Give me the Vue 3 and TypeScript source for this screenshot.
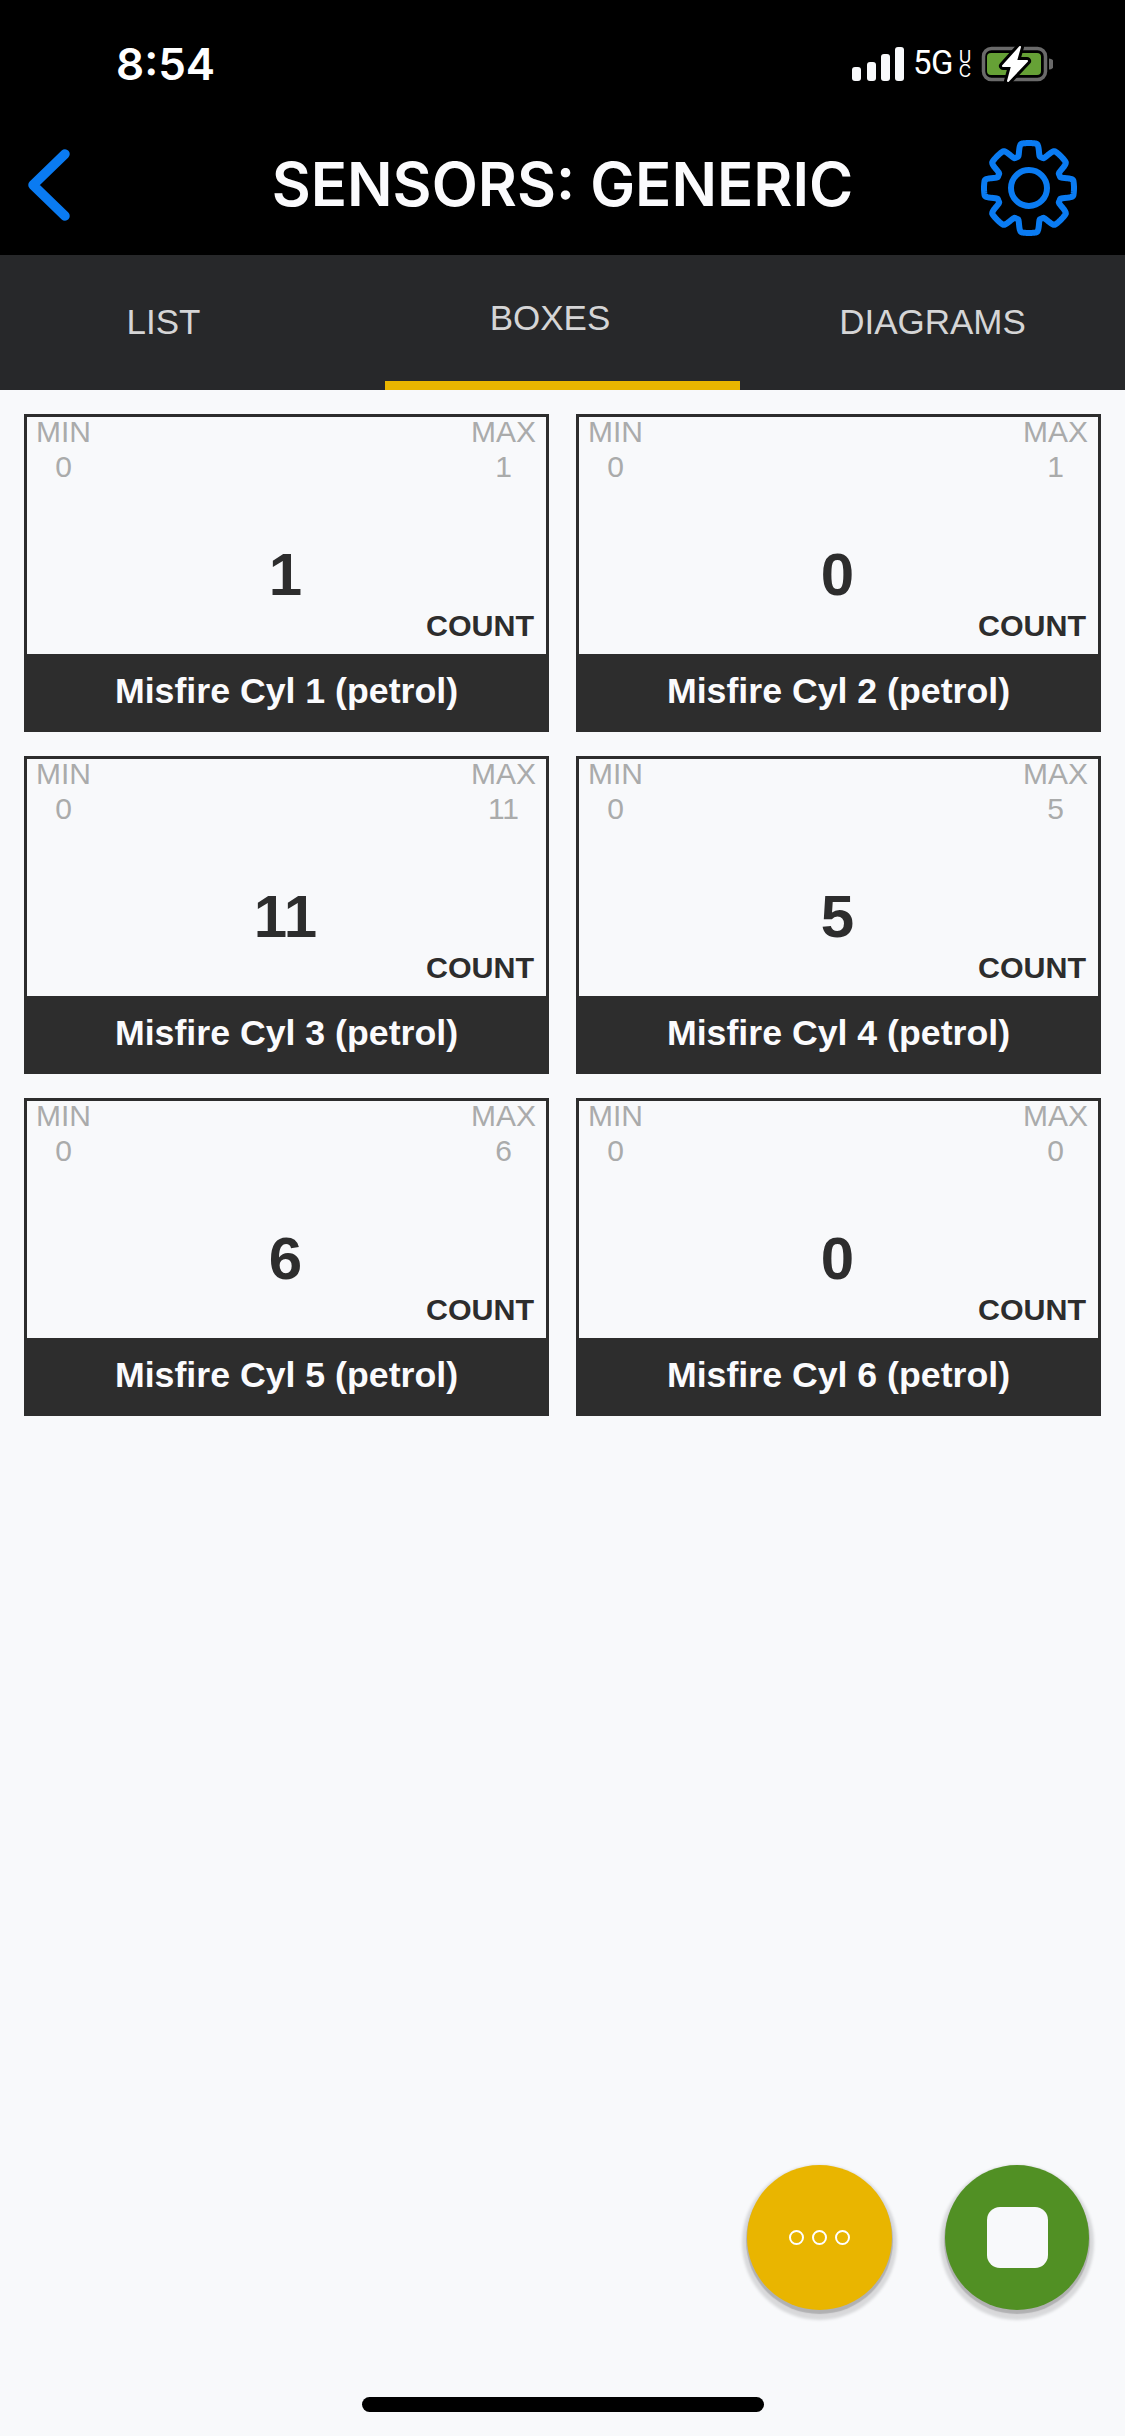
<script setup lang="ts">
interface Box { name: string; min: number; max: number; value: number }

const boxes: Box[] = [
  { name: 'Misfire Cyl 1 (petrol)', min: 0, max: 1, value: 1 },
  { name: 'Misfire Cyl 2 (petrol)', min: 0, max: 1, value: 0 },
  { name: 'Misfire Cyl 3 (petrol)', min: 0, max: 11, value: 11 },
  { name: 'Misfire Cyl 4 (petrol)', min: 0, max: 5, value: 5 },
  { name: 'Misfire Cyl 5 (petrol)', min: 0, max: 6, value: 6 },
  { name: 'Misfire Cyl 6 (petrol)', min: 0, max: 0, value: 0 },
]

function gearPath(): string {
  const teeth = 8
  const outer = 45
  const root = 33
  const pts: string[] = []
  const steps = 320
  const sector = (Math.PI * 2) / teeth
  for (let i = 0; i < steps; i++) {
    const a = (i / steps) * Math.PI * 2
    const d = Math.abs(((a + sector / 2) % sector) - sector / 2) / (sector / 2)
    const t = d < 0.42 ? 1 : d > 0.88 ? 0 : 0.5 + 0.5 * Math.cos(((d - 0.42) / 0.46) * Math.PI)
    const r = root + (outer - root) * t
    const x = 50 + r * Math.sin(a)
    const y = 50 - r * Math.cos(a)
    pts.push(`${x.toFixed(2)} ${y.toFixed(2)}`)
  }
  return 'M' + pts.join('L') + 'Z'
}
const gear = gearPath()
</script>

<template>
  <div class="screen">
    <header class="top">
      <div class="status">
        <span class="time">8:54</span>
        <div class="status-right">
          <svg class="signal" width="52" height="34" viewBox="0 0 52 34">
            <rect x="0" y="20" width="9" height="14" rx="3" />
            <rect x="15" y="15" width="9" height="19" rx="3" />
            <rect x="29" y="7" width="9" height="27" rx="3" />
            <rect x="43" y="0" width="9" height="34" rx="3" />
          </svg>
          <span class="net">5G</span>
          <span class="uc"><span>U</span><span>C</span></span>
          <svg class="battery" width="72" height="38" viewBox="0 0 72 38">
            <rect x="2.5" y="3.5" width="62" height="31" rx="8" fill="#000" stroke="#6a6a6a" stroke-width="3.5" />
            <rect x="6" y="8" width="54" height="22" rx="4" fill="#66a136" />
            <path d="M68 13.5 a5 5 0 0 1 0 11z" fill="#6a6a6a" />
            <path d="M39 2 L22 21 H31 L27 36 L46 16 H35 Z" fill="#000" stroke="#000" stroke-width="8" stroke-linejoin="round" />
            <path d="M39 2 L22 21 H31 L27 36 L46 16 H35 Z" fill="#fff" stroke="#fff" stroke-width="2" stroke-linejoin="round" />
          </svg>
        </div>
      </div>
      <div class="nav">
        <svg class="back" width="50" height="72" viewBox="0 0 50 72">
          <path d="M41 5 L9 36 L41 67" fill="none" stroke="#0a7bf2" stroke-width="9.5" stroke-linecap="round" stroke-linejoin="round" />
        </svg>
        <h1 class="title">SENSORS: GENERIC</h1>
        <svg class="gear" width="96" height="96" viewBox="2 2 96 96">
          <path :d="gear" fill="none" stroke="#0a7bf2" stroke-width="6" stroke-linejoin="round" />
          <circle cx="50" cy="50" r="18" fill="none" stroke="#0a7bf2" stroke-width="6" />
        </svg>
      </div>
    </header>

    <nav class="tabs">
      <div class="tab tab-list">LIST</div>
      <div class="tab tab-boxes">BOXES</div>
      <div class="tab tab-diagrams">DIAGRAMS</div>
    </nav>

    <main class="grid">
      <section v-for="b in boxes" :key="b.name" class="card">
        <div class="card-body">
          <div class="limits">
            <div class="limit">
              <span>MIN</span>
              <span>{{ b.min }}</span>
            </div>
            <div class="limit">
              <span>MAX</span>
              <span>{{ b.max }}</span>
            </div>
          </div>
          <div class="value">{{ b.value }}</div>
          <div class="unit">COUNT</div>
        </div>
        <div class="label">{{ b.name }}</div>
      </section>
    </main>

    <button class="fab fab-more" type="button" aria-label="More">
      <i class="ring"></i><i class="ring"></i><i class="ring"></i>
    </button>
    <button class="fab fab-stop" type="button" aria-label="Stop">
      <i class="square"></i>
    </button>
    <div class="home"></div>
  </div>
</template>

<style>
html, body { margin: 0; background: #f8f9fb; }
</style>

<style scoped>
.screen {
  position: relative;
  width: 1125px;
  height: 2436px;
  overflow: hidden;
  background: #f8f9fb;
  font-family: "Liberation Sans", Arial, sans-serif;
}
.top { height: 255px; background: #000; color: #fff; }
.status {
  height: 127px;
  display: flex;
  justify-content: space-between;
  align-items: flex-start;
  padding: 0 72px 0 116px;
  box-sizing: border-box;
}
.time {
  margin-top: 36px;
  font: 600 44px/56px Inter, sans-serif;
  color: #fff;
}
.status-right { display: flex; align-items: flex-start; margin-top: 46px; }
.signal { fill: #f8f9fb; margin-top: 1px; flex: none; }
.net {
  width: 40px;
  margin-left: 9px;
  font: 400 33px/34px Roboto, sans-serif;
  letter-spacing: -0.5px;
  white-space: nowrap;
}
.uc {
  width: 14px;
  display: flex;
  flex-direction: column;
  align-items: center;
  margin-left: 5px;
  margin-top: 4px;
  font: 400 17px/14px Inter, sans-serif;
}
.battery { margin-left: 9px; margin-top: -1px; flex: none; }
.nav {
  height: 128px;
  display: grid;
  grid-template-columns: 1fr auto 1fr;
  align-items: start;
  padding: 0 48px;
  box-sizing: border-box;
}
.back { margin: 22px 0 0 -24px; justify-self: start; }
.title {
  margin: 21px 0 0;
  text-align: center;
  font: 600 60px/72px Inter, sans-serif;
  white-space: nowrap;
  color: #fbfbfd;
}
.gear { justify-self: end; margin-top: 13px; }

.tabs {
  display: grid;
  grid-template-columns: 385px 355px 385px;
  height: 135px;
  background: #27282a;
  color: #d5d5d6;
  font-size: 35px;
}
.tab { display: flex; justify-content: center; align-items: center; height: 100%; box-sizing: border-box; }
.tab-list { padding: 0 58px 2px 0; }
.tab-boxes { padding: 0 25px 0 0; border-bottom: 9px solid #e9b500; }
.tab-diagrams { padding-bottom: 2px; }
.grid {
  display: grid;
  grid-template-columns: 525px 525px;
  column-gap: 27px;
  row-gap: 24px;
  padding: 24px;
}
.card { height: 318px; display: flex; flex-direction: column; }
.card-body {
  position: relative;
  flex: 1;
  border: 3px solid #2d2d2d;
  border-bottom: 0;
  padding: 0 10px 0 9px;
}
.limits { display: flex; justify-content: space-between; margin-top: -3px; color: #aaabab; font-size: 30px; line-height: 35px; }
.limit { display: flex; flex-direction: column; align-items: center; }
.value {
  position: absolute;
  left: 0;
  right: 2px;
  top: 124px;
  text-align: center;
  font-size: 60px;
  font-weight: 700;
  line-height: 68px;
  color: #2d2d2d;
}
.unit {
  position: absolute;
  right: 12px;
  top: 190px;
  font-size: 30.4px;
  font-weight: 700;
  line-height: 36px;
  color: #2d2d2d;
}
.label {
  height: 78px;
  background: #2d2d2d;
  color: #fbfbfd;
  font-size: 35.7px;
  font-weight: 700;
  line-height: 75px;
  text-align: center;
}

.fab {
  position: absolute;
  top: 2165px;
  width: 145px;
  height: 145px;
  padding: 0;
  border: 0;
  border-radius: 50%;
  display: flex;
  align-items: center;
  justify-content: center;
  box-shadow: 0 3px 1px 1px rgba(0, 0, 0, 0.18), 0 5px 3px 5px rgba(0, 0, 0, 0.13);
}
.fab-more { left: 747px; background: #e9b500; gap: 8px; }
.fab-stop { left: 945px; width: 144px; background: #519024; }
.ring {
  width: 15px;
  height: 15px;
  box-sizing: border-box;
  border: 2.5px solid #fff;
  border-radius: 50%;
}
.square { width: 61px; height: 61px; border-radius: 13px; background: #f8f9fb; }
.home {
  position: absolute;
  left: 362px;
  top: 2397px;
  width: 402px;
  height: 15px;
  border-radius: 8px;
  background: #000;
}
</style>
